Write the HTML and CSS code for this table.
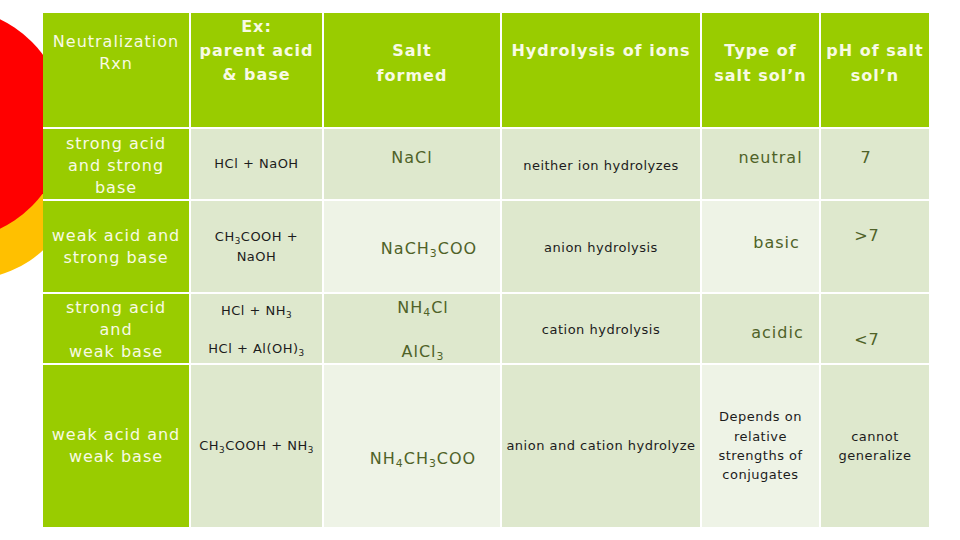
FILE: index.html
```html
<!DOCTYPE html>
<html lang="en">
<head>
<meta charset="utf-8">
<title>Salt hydrolysis</title>
<link rel="stylesheet" href="styles.css">
</head>
<body>
<div class="deco" aria-hidden="true">
  <svg width="43" height="300" viewBox="0 0 43 300">
    <circle cx="-30" cy="172" r="107" fill="#FFC000"/>
    <circle cx="-50" cy="124" r="116" fill="#FF0000"/>
  </svg>
</div>
<main class="table">
  <div class="cell head h-rxn"><span>Neutralization<br>Rxn</span></div>
  <div class="cell head bold h-ex"><span>Ex:<br>parent acid<br>&amp; base</span></div>
  <div class="cell head bold h-std"><span>Salt<br>formed</span></div>
  <div class="cell head bold h-std"><span>Hydrolysis of ions</span></div>
  <div class="cell head bold h-std"><span>Type of<br>salt sol’n</span></div>
  <div class="cell head bold h-std"><span>pH of salt<br>sol’n</span></div>

  <div class="cell side r2-side"><span>strong acid<br>and strong<br>base</span></div>
  <div class="cell small"><span>HCl + NaOH</span></div>
  <div class="cell big r2-salt"><span>NaCl</span></div>
  <div class="cell small r2-hyd"><span>neither ion hydrolyzes</span></div>
  <div class="cell big r2-type"><span>neutral</span></div>
  <div class="cell big r2-ph"><span>7</span></div>

  <div class="cell side"><span>weak acid and<br>strong base</span></div>
  <div class="cell small lh20"><span>CH<sub>3</sub>COOH +<br>NaOH</span></div>
  <div class="cell big light r3-salt"><span>NaCH<sub>3</sub>COO</span></div>
  <div class="cell small r3-hyd"><span>anion hydrolysis</span></div>
  <div class="cell big light r3-type"><span>basic</span></div>
  <div class="cell big r3-ph"><span>&gt;7</span></div>

  <div class="cell side r4-side"><span>strong acid<br>and<br>weak base</span></div>
  <div class="cell small pair r4-ex"><span>HCl + NH<sub>3</sub></span><span>HCl + Al(OH)<sub>3</sub></span></div>
  <div class="cell big pair r4-salt"><span>NH<sub>4</sub>Cl</span><span>AlCl<sub>3</sub></span></div>
  <div class="cell small r4-hyd"><span>cation hydrolysis</span></div>
  <div class="cell big r4-type"><span>acidic</span></div>
  <div class="cell big r4-ph"><span>&lt;7</span></div>

  <div class="cell side"><span>weak acid and<br>weak base</span></div>
  <div class="cell small"><span>CH<sub>3</sub>COOH + NH<sub>3</sub></span></div>
  <div class="cell big light r5-salt"><span>NH<sub>4</sub>CH<sub>3</sub>COO</span></div>
  <div class="cell small"><span>anion and cation hydrolyze</span></div>
  <div class="cell small light lh19"><span>Depends on<br>relative<br>strengths of<br>conjugates</span></div>
  <div class="cell small lh19"><span>cannot<br>generalize</span></div>
</main>
</body>
</html>
```

FILE: styles.css
```css
html, body {
  margin: 0;
  padding: 0;
  background: #ffffff;
}

body {
  width: 960px;
  height: 540px;
  overflow: hidden;
  position: relative;
  font-family: "DejaVu Sans", Verdana, sans-serif;
}

.deco {
  position: absolute;
  left: 0;
  top: 0;
  z-index: 0;
  line-height: 0;
}

.table {
  position: relative;
  z-index: 1;
  margin: 13px 0 0 43px;
  width: 886px;
  display: grid;
  grid-template-columns: 146px 131px 176px 198px 117px 108px;
  grid-template-rows: 114px 70px 91px 69px 162px;
  gap: 2px;
}

.cell {
  display: flex;
  flex-direction: column;
  align-items: center;
  justify-content: center;
  text-align: center;
  white-space: nowrap;
  background: #dee8cd;
  box-sizing: border-box;
}

.cell > span {
  display: block;
}

.cell.light {
  background: #eef3e6;
}

sub {
  font-size: 0.68em;
  vertical-align: -0.3em;
  line-height: 0;
}

/* header row */
.head {
  background: #99cc00;
  color: #f8fae4;
  font-size: 16px;
  letter-spacing: 1px;
  justify-content: flex-start;
}

.bold {
  font-weight: bold;
}

.h-rxn {
  line-height: 22px;
  padding-top: 18px;
}

.h-ex {
  line-height: 24px;
  padding-top: 2px;
}

.h-std {
  line-height: 25px;
  padding-top: 25px;
}

/* first column */
.side {
  background: #99cc00;
  color: #f8fae4;
  font-size: 16px;
  letter-spacing: 1px;
  line-height: 22px;
}

.r2-side {
  padding-top: 4px;
}

.r4-side {
  padding-top: 3px;
}

/* body text */
.small {
  font-size: 13px;
  letter-spacing: 0.5px;
  color: #1c1c1c;
  line-height: 20px;
}

.lh20 {
  line-height: 20px;
}

.lh19 {
  line-height: 19.3px;
}

.big {
  font-size: 16px;
  letter-spacing: 1px;
  color: #4f6228;
  line-height: 22px;
}

.pair {
  gap: 18px;
}

.big.pair {
  gap: 22px;
}

/* per-cell placement */
.r2-salt { padding-bottom: 12px; }
.r2-hyd { padding-top: 4px; }
.r2-type { padding-bottom: 12px; padding-left: 20px; }
.r2-ph { padding-bottom: 12px; padding-right: 18px; }

.r3-salt { padding-top: 5px; padding-left: 34px; }
.r3-hyd { padding-top: 3px; }
.r3-type { padding-bottom: 7px; padding-left: 32px; }
.r3-ph { padding-bottom: 21px; padding-right: 16px; }

.r4-ex { padding-top: 3px; }
.r4-salt { padding-top: 3px; padding-left: 22px; }
.r4-hyd { padding-top: 3px; }
.r4-type { padding-top: 9px; padding-left: 34px; }
.r4-ph { padding-top: 23px; padding-right: 16px; }

.r5-salt { padding-top: 26px; padding-left: 22px; }
```
